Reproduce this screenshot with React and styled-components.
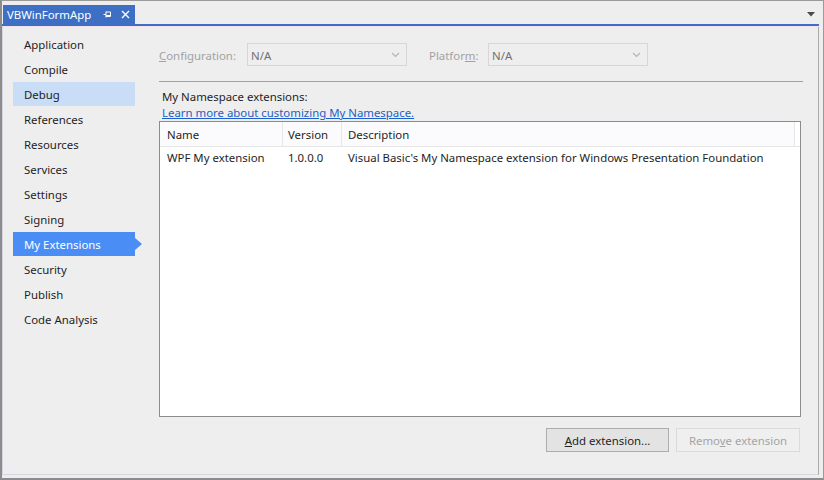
import React from 'react';
import styled, { createGlobalStyle } from 'styled-components';

const GlobalStyle = createGlobalStyle`
  html, body {
    margin: 0;
    padding: 0;
    background: #eeeeef;
  }
  body {
    font-family: "Noto Sans", "Open Sans", sans-serif;
    font-size: 11.4px;
    color: #1e1e1e;
  }
`

const Window = styled.div`
  width: 824px;
  height: 480px;
  box-sizing: border-box;
  border: 1px solid #9a9a9a;
  border-left: 2px solid #8c8c8c;
  border-bottom: 2px solid #8c8c8c;
  background: #eeeeef;
  display: flex;
  flex-direction: column;
  overflow: hidden;
`

const TabStrip = styled.div`
  height: 23px;
  display: flex;
  align-items: flex-end;
  padding-left: 1px;
  padding-right: 6px;
  flex-shrink: 0;
`

const Tab = styled.div`
  width: 132px;
  height: 19px;
  box-sizing: border-box;
  background: #3d6fc5;
  color: #fff;
  display: flex;
  align-items: center;
  padding-left: 4px;
  line-height: 19px;
`

const TabTitle = styled.span`
  flex: 1;
`

const TabIcon = styled.span`
  display: flex;
  align-items: center;
  margin-right: ${({ gap }) => gap}px;
`

const StripSpacer = styled.div`
  flex: 1;
`

const StripMenu = styled.div`
  width: 12px;
  height: 19px;
  display: flex;
  align-items: center;
  justify-content: center;
`

const Frame = styled.div`
  flex: 1;
  display: flex;
  flex-direction: column;
  margin-right: 4px;
  border-top: 2px solid #3d6fc5;
  min-height: 0;
`

const PinkLine = styled.div`
  height: 1px;
  background: #f2dfea;
  margin-right: 1px;
`

const Body = styled.div`
  flex: 1;
  display: flex;
  border-left: 1px solid #d6d6e2;
  border-right: 1px solid #a8a8ad;
  border-bottom: 1px solid #d6d6e2;
  margin-bottom: 3px;
  min-height: 0;
`

const Sidebar = styled.nav`
  width: 154px;
  flex-shrink: 0;
  padding: 5px 0 0 10px;
  box-sizing: border-box;
  display: flex;
  flex-direction: column;
  gap: 1px;
`

const NavItem = styled.div`
  position: relative;
  width: 122px;
  height: 24px;
  box-sizing: border-box;
  padding-left: 11px;
  display: flex;
  align-items: center;
  background: ${({ state }) =>
    state === 'active' ? '#4a8ef5' : state === 'hover' ? '#c9ddf6' : 'transparent'};
  color: ${({ state }) => (state === 'active' ? '#fff' : '#1e1e1e')};

  &::after {
    content: '';
    display: ${({ state }) => (state === 'active' ? 'block' : 'none')};
    position: absolute;
    right: -7px;
    top: 6px;
    border-top: 6px solid transparent;
    border-bottom: 6px solid transparent;
    border-left: 7px solid #4a8ef5;
  }
`

const Main = styled.div`
  flex: 1;
  display: flex;
  flex-direction: column;
  padding: 16px 15px 22px 2px;
  min-width: 0;
`

const ConfigRow = styled.div`
  display: flex;
  align-items: center;
  height: 23px;
`

const DimLabel = styled.span`
  color: #a2a2a2;
  width: ${({ w }) => w}px;
  flex-shrink: 0;
  padding-top: 1px;
`

const Combo = styled.div`
  width: 160px;
  height: 23px;
  box-sizing: border-box;
  border: 1px solid #d6d6d6;
  display: flex;
  align-items: center;
  justify-content: space-between;
  padding: 1px 6px 0 3px;
  color: #707070;
  margin-right: ${({ gap }) => gap || 0}px;
`

const Separator = styled.div`
  height: 1px;
  background: #a0a0a0;
  margin: 15px 0 0 0;
`

const SectionTitle = styled.div`
  margin: 7px 0 0 3px;
  line-height: 15px;
`

const HelpLink = styled.a`
  margin: 1px 0 0 3px;
  color: #1c5fc9;
  text-decoration: underline;
  line-height: 15px;
  align-self: flex-start;
`

const ListBox = styled.div`
  flex: 1;
  margin-top: 1px;
  margin-right: 2px;
  border: 1px solid #8b8b8e;
  background: #fff;
  display: flex;
  flex-direction: column;
`

const HeaderRow = styled.div`
  display: flex;
  height: 24px;
  border-bottom: 1px solid #e6e6e6;
`

const HeaderCell = styled.div`
  width: ${({ w }) => (w ? `${w}px` : 'auto')};
  flex: ${({ w }) => (w ? '0 0 auto' : 1)};
  box-sizing: border-box;
  padding-left: ${({ pad }) => pad}px;
  display: flex;
  align-items: center;
  border-right: 1px solid ${({ last }) => (last ? 'transparent' : '#e6e6e6')};
  background: ${({ filler }) => (filler ? '#fff' : '#fbfbfd')};
`

const DataRow = styled.div`
  display: flex;
  height: 20px;
`

const Cell = styled.div`
  width: ${({ w }) => (w ? `${w}px` : 'auto')};
  flex: ${({ w }) => (w ? '0 0 auto' : 1)};
  box-sizing: border-box;
  padding-left: ${({ pad }) => pad}px;
  display: flex;
  align-items: center;
  white-space: nowrap;
`

const ButtonRow = styled.div`
  display: flex;
  justify-content: flex-end;
  gap: 7px;
  margin-top: 11px;
`

const Button = styled.button`
  width: ${({ w }) => w}px;
  height: 24px;
  box-sizing: border-box;
  font-family: inherit;
  font-size: 11.4px;
  border: 1px solid ${({ disabled }) => (disabled ? '#dadada' : '#adadad')};
  background: ${({ disabled }) => (disabled ? '#efefef' : '#e3e3e3')};
  color: ${({ disabled }) => (disabled ? '#a4a4a4' : '#1e1e1e')};
  padding: 0;
  margin-right: ${({ right }) => right || 0}px;
`

const navItems = [
  'Application',
  'Compile',
  'Debug',
  'References',
  'Resources',
  'Services',
  'Settings',
  'Signing',
  'My Extensions',
  'Security',
  'Publish',
  'Code Analysis',
]

const Chevron = () => (
  <svg width="9" height="6" viewBox="0 0 9 6">
    <path d="M1 1 L4.5 4.5 L8 1" fill="none" stroke="#b4b4b4" strokeWidth="1.2" />
  </svg>
)

export default function App() {
  return (
    <>
      <GlobalStyle />
      <Window>
        <TabStrip>
          <Tab>
            <TabTitle>VBWinFormApp</TabTitle>
            <TabIcon gap={9}>
              <svg width="9" height="9" viewBox="0 0 9 9">
                <path d="M0.5 4.5 H3 M3 1.5 V7.5 M3 2 H7.5 V6.5 H3 M3 5.5 H7.5" fill="none" stroke="#fff" strokeWidth="1" />
              </svg>
            </TabIcon>
            <TabIcon gap={5}>
              <svg width="9" height="9" viewBox="0 0 9 9">
                <path d="M1 1 L8 8 M8 1 L1 8" stroke="#fff" strokeWidth="1.4" />
              </svg>
            </TabIcon>
          </Tab>
          <StripSpacer />
          <StripMenu>
            <svg width="8" height="5" viewBox="0 0 8 5">
              <path d="M0 0 H8 L4 4.5 Z" fill="#4a4a4a" />
            </svg>
          </StripMenu>
        </TabStrip>
        <Frame>
          <PinkLine />
          <Body>
            <Sidebar>
              {navItems.map((name) => (
                <NavItem
                  key={name}
                  state={name === 'My Extensions' ? 'active' : name === 'Debug' ? 'hover' : undefined}
                >
                  {name}
                </NavItem>
              ))}
            </Sidebar>
            <Main>
              <ConfigRow>
                <DimLabel w={88}><u>C</u>onfiguration:</DimLabel>
                <Combo gap={22}>
                  <span>N/A</span>
                  <Chevron />
                </Combo>
                <DimLabel w={59}>Platfor<u>m</u>:</DimLabel>
                <Combo>
                  <span>N/A</span>
                  <Chevron />
                </Combo>
              </ConfigRow>
              <Separator />
              <SectionTitle>My Namespace extensions:</SectionTitle>
              <HelpLink>Learn more about customizing My Namespace.</HelpLink>
              <ListBox>
                <HeaderRow>
                  <HeaderCell w={123} pad={7}>Name</HeaderCell>
                  <HeaderCell w={59} pad={5}>Version</HeaderCell>
                  <HeaderCell w={453} pad={6}>Description</HeaderCell>
                  <HeaderCell filler last />
                </HeaderRow>
                <DataRow>
                  <Cell w={123} pad={7}>WPF My extension</Cell>
                  <Cell w={59} pad={5}>1.0.0.0</Cell>
                  <Cell pad={6}>Visual Basic's My Namespace extension for Windows Presentation Foundation</Cell>
                </DataRow>
              </ListBox>
              <ButtonRow>
                <Button w={123}><u>A</u>dd extension...</Button>
                <Button w={124} disabled right={3}>Remo<u>v</u>e extension</Button>
              </ButtonRow>
            </Main>
          </Body>
        </Frame>
      </Window>
    </>
  )
}
